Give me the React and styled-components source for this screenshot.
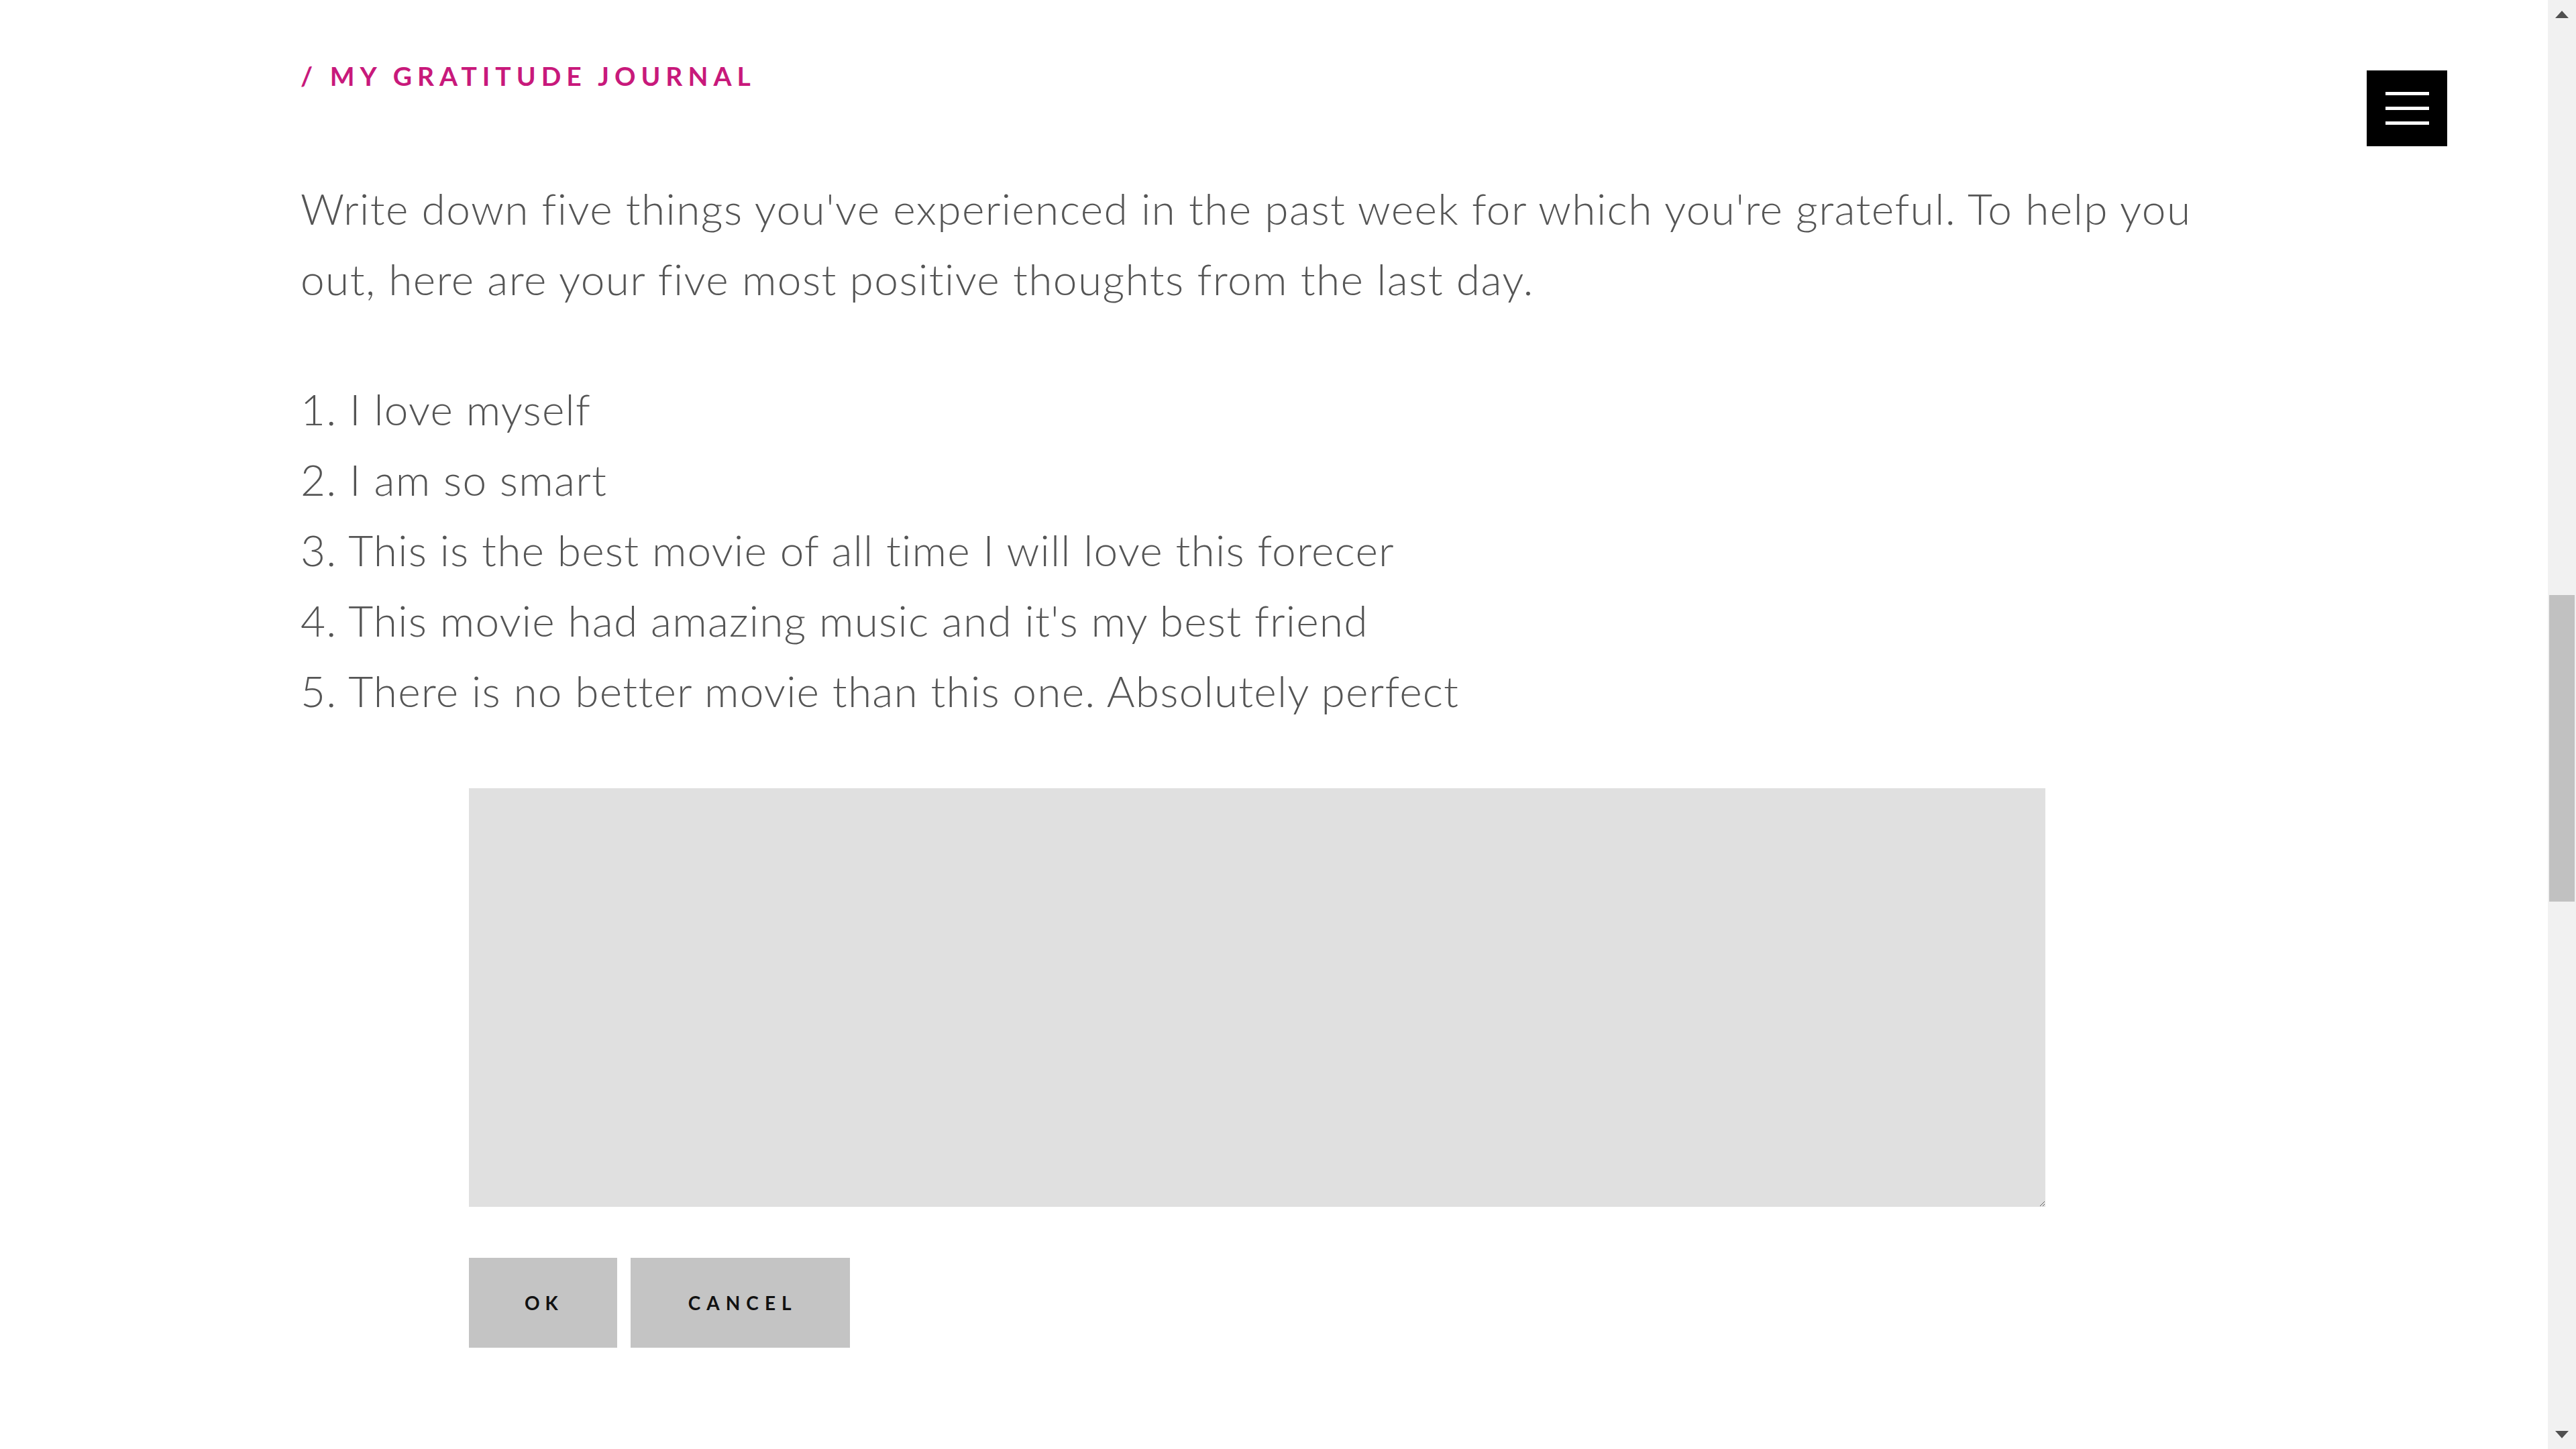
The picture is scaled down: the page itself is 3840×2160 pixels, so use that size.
import styled, { createGlobalStyle } from 'styled-components';

const GlobalStyle = createGlobalStyle`
	html, body {
		margin: 0;
		padding: 0;
		height: 100%;
		overflow: hidden;
		background: #fff;
	}
	* {
		box-sizing: border-box;
	}
`;

const Shell = styled.div`
	display: flex;
	height: 100vh;
	font-family: 'Lato', 'Liberation Sans', sans-serif;
	font-variant-ligatures: none;
`;

const Page = styled.main`
	position: relative;
	flex: 1;
	min-width: 0;
	padding-top: 94px;
`;

const Content = styled.section`
	width: 2880px;
	margin-left: 448px;
`;

const Eyebrow = styled.h2`
	margin: 0;
	font-size: 39px;
	line-height: 1;
	font-weight: 700;
	letter-spacing: 8px;
	color: #c8197b;
	text-transform: uppercase;
`;

const Intro = styled.p`
	margin: 125px 0 0;
	font-size: 64px;
	line-height: 105px;
	font-weight: 300;
	letter-spacing: 1.4px;
	color: #555;
`;

const Thoughts = styled.ol`
	margin: 89px 0 0;
	padding: 0;
	list-style: none;
	font-size: 64px;
	line-height: 105px;
	font-weight: 300;
	letter-spacing: 1.2px;
	color: #555;
`;

const Entry = styled.textarea`
	display: block;
	width: 2350px;
	height: 624px;
	margin: 93px 0 0 251px;
	padding: 24px;
	border: none;
	outline: none;
	background: #e0e0e0;
	font-family: inherit;
	font-size: 48px;
	color: #333;
`;

const Actions = styled.div`
	display: flex;
	gap: 20px;
	margin: 76px 0 0 251px;
`;

const ActionButton = styled.button`
	height: 134px;
	padding: 0 ${(p) => (p.$wide ? 78 : 80)}px 0 ${(p) => (p.$wide ? 86 : 83)}px;
	border: none;
	background: #c4c4c4;
	font-family: inherit;
	font-size: 28px;
	font-weight: 700;
	letter-spacing: ${(p) => (p.$wide ? 9 : 8)}px;
	color: #111;
	cursor: pointer;
`;

const MenuButton = styled.button`
	position: absolute;
	top: 105px;
	right: 150px;
	width: 120px;
	height: 113px;
	display: flex;
	flex-direction: column;
	align-items: center;
	justify-content: center;
	gap: 17px;
	padding: 0;
	border: none;
	background: #000;
	cursor: pointer;
`;

const MenuLine = styled.span`
	display: block;
	width: 65px;
	height: 5px;
	background: #fff;
`;

const Scrollbar = styled.div`
	width: 42px;
	display: flex;
	flex-direction: column;
	background: #f1f1f1;
`;

const ScrollArrow = styled.div`
	height: 42px;
	display: flex;
	align-items: ${(p) => (p.$down ? 'flex-end' : 'flex-start')};
	justify-content: center;
	padding: ${(p) => (p.$down ? '0 0 16px' : '16px 0 0')};

	&::before {
		content: '';
		border-left: 10px solid transparent;
		border-right: 10px solid transparent;
		${(p) => (p.$down ? 'border-top' : 'border-bottom')}: 11px solid #505050;
	}
`;

const ScrollTrack = styled.div`
	flex: 1;
	padding: 0 2px;
`;

const ScrollThumb = styled.div`
	height: 457px;
	margin-top: 845px;
	background: #c1c1c1;
`;

const thoughts = [
	'I love myself',
	'I am so smart',
	'This is the best movie of all time I will love this forecer',
	"This movie had amazing music and it's my best friend",
	'There is no better movie than this one. Absolutely perfect',
];

export default function App() {
	return (
		<>
			<GlobalStyle />
			<Shell>
				<Page>
					<Content>
						<Eyebrow>/ My Gratitude Journal</Eyebrow>
						<Intro>
							Write down five things you've experienced in the past week for which you're grateful. To help you
							out, here are your five most positive thoughts from the last day.
						</Intro>
						<Thoughts>
							{thoughts.map((text, i) => (
								<li key={i}>
									{i + 1}. {text}
								</li>
							))}
						</Thoughts>
						<Entry />
						<Actions>
							<ActionButton>OK</ActionButton>
							<ActionButton $wide>CANCEL</ActionButton>
						</Actions>
					</Content>
					<MenuButton aria-label="Menu">
						<MenuLine />
						<MenuLine />
						<MenuLine />
					</MenuButton>
				</Page>
				<Scrollbar>
					<ScrollArrow />
					<ScrollTrack>
						<ScrollThumb />
					</ScrollTrack>
					<ScrollArrow $down />
				</Scrollbar>
			</Shell>
		</>
	);
}
